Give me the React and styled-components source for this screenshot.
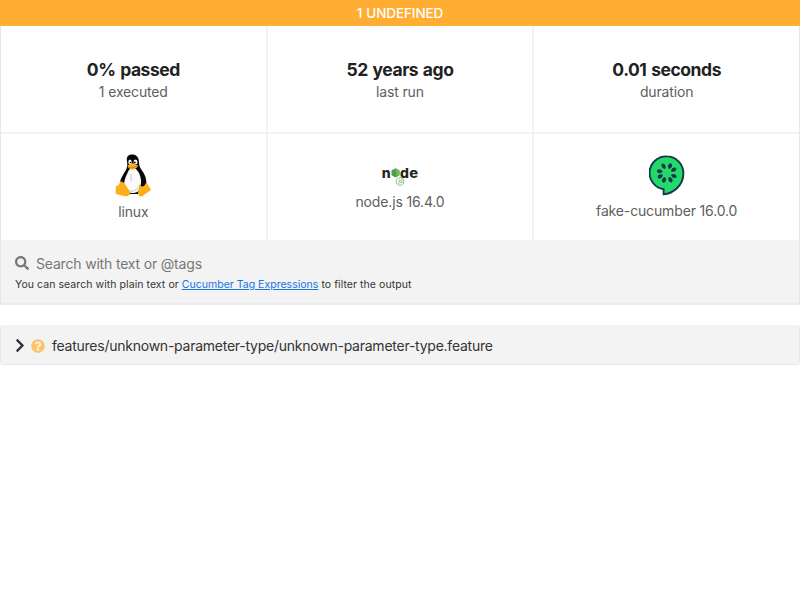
import React from "react";
import styled, { createGlobalStyle } from "styled-components";
import { FaSearch, FaQuestionCircle, FaChevronRight } from "react-icons/fa";

const GlobalStyle = createGlobalStyle`
  * { box-sizing: border-box; }
  body {
    margin: 0;
    background: #fff;
    font-family: Inter, "Liberation Sans", sans-serif;
    font-size: 14px;
    color: #333;
  }
`;

const Banner = styled.header`
  height: 26px;
  line-height: 26px;
  background: #ffad33;
  color: #fff;
  text-align: center;
  font-size: 13.5px;
  font-weight: 500;
  letter-spacing: -0.1px;
  word-spacing: 0.5px;
`;

const Summary = styled.dl`
  display: grid;
  grid-template-columns: repeat(3, 1fr);
  grid-template-rows: 106px 106px;
  gap: 2px;
  margin: 0;
  border: solid #e8e8e8;
  border-width: 0 1px;
  background: #f3f3f3;
`;

const Cell = styled.div`
  display: flex;
  flex-direction: column;
  align-items: center;
  padding-top: ${(p) => p.$top}px;
  background: #fff;
`;

const Value = styled.dt`
  height: 24px;
  line-height: 24px;
  font-size: 17.5px;
  font-weight: 700;
  letter-spacing: -0.45px;
  word-spacing: 1px;
  color: #222;
`;

const Label = styled.dd`
  margin: ${(p) => p.$gap ?? 0}px 0 0;
  line-height: 20px;
  letter-spacing: -0.15px;
  color: #5e5e5e;
`;

const SearchPanel = styled.section`
  height: 65px;
  padding: 14px 14px 0;
  border: solid #e8e8e8;
  border-width: 0 1px 2px;
  border-bottom-color: #ececec;
  background: #f3f3f3;
`;

const SearchField = styled.label`
  display: flex;
  align-items: center;
  gap: 7px;
  height: 20px;
  color: #777;

  svg { margin-top: -3px; }
`;

const SearchInput = styled.input`
  flex: 1;
  height: 20px;
  margin-top: -2px;
  padding: 0;
  border: 0;
  outline: 0;
  background: transparent;
  font: inherit;
  letter-spacing: -0.18px;

  &::placeholder { color: #777; opacity: 1; }
`;

const Hint = styled.p`
  margin: 3px 0 0;
  font-size: 10.5px;
  line-height: 15px;
  letter-spacing: 0.065px;
  white-space: nowrap;
  color: #333;

  a {
    color: #1872e8;
    letter-spacing: 0.02px;
    text-decoration: underline;
  }
`;

const Feature = styled.button`
  display: flex;
  align-items: center;
  width: 100%;
  height: 40px;
  margin-top: 20px;
  padding: 1px 14px 0;
  border: 1px solid #e8e8e8;
  border-top-color: #f3f3f3;
  border-radius: 3px;
  background: #f3f3f3;
  color: #333;
  font: inherit;
  line-height: 18px;
  letter-spacing: -0.245px;
`;

const Chevron = styled(FaChevronRight)`
  width: 10px;
  height: 15px;
  margin-right: 6px;
`;

const Status = styled(FaQuestionCircle)`
  margin-right: 7px;
  color: #ffc266;
`;

const Linux = () => (
  <svg width="36" height="43" viewBox="0 0 36 43">
    <path d="M12 7C11 2 14 .5 17.5.5S24 3 24 8c0 4 1 6 4 10 3 5 4 9 3 15l-6 7H11L5 31c0-6 2-8 4-12 2-3 4-5 3-12Z" fill="#080808" />
    <path d="M13 18c1-3 3-4 5-4 3 0 4 2 6 5 2 5 3 9 1 15-1 4-4 5-8 5-3 0-5-2-7-5-2-5 0-10 3-16Z" fill="#fafafa" />
    <ellipse cx="15" cy="8" rx="1.7" ry="2.5" fill="#fff" />
    <ellipse cx="20.5" cy="8" rx="2" ry="2.6" fill="#fff" />
    <circle cx="15.4" cy="8.5" r=".8" /><circle cx="19.8" cy="8.5" r=".9" />
    <path d="M12.5 11.5 17 9l6 2.5-1 2-4.5 2.5-4-2Z" fill="#f9b11c" />
    <path d="M13 13q4 2 9-1" fill="none" stroke="#a7660b" strokeWidth=".6" />
    <path d="M16 20v7m-5 8q6 5 12-1" fill="none" stroke="#b3b3b3" strokeWidth=".7" />
    <path d="M5 28c3-2 6 4 9 8 3 5-1 7-5 6L1 40c-1-2 0-4 0-8 2 0 3-1 4-4Z" fill="#fbb01b" />
    <path d="M24 30c1 3 5 4 7-1 2 0 2 3 4 5 3 2-2 4-6 7-3 3-6 1-6-2Z" fill="#fbb01b" />
  </svg>
);

const Word = styled.text`
  font-family: Inter, sans-serif;
  font-size: 13.5px;
  font-weight: 800;
  fill: #222722;
`;

const Node = () => (
  <svg width="36" height="23" viewBox="0 0 36 23">
    <Word x="-.3" y="14.7" textLength="8.9" lengthAdjust="spacingAndGlyphs">n</Word>
    <path d="m13.5 5.2 4 2.3v4.8l-4 2.3-4-2.3V7.5Z" fill="#4e9e43" />
    <path d="m13.5 5.2 4 2.3v4.8l-2.7 1.4Z" fill="#6fb95c" />
    <Word x="18.1" y="14.7" textLength="8.9" lengthAdjust="spacingAndGlyphs">d</Word>
    <Word x="27.3" y="14.7" textLength="8.9" lengthAdjust="spacingAndGlyphs">e</Word>
    <path d="m18 14.4 3.7 2v4.1L18 22.6l-3.7-2.1v-4.1Z" fill="#fff" stroke="#70b866" strokeWidth=".8" />
    <path d="M17.3 16.5v3.2q0 1-1 .6m4.2-3.2q-2.1-.8-2.2.4c0 .8 2.3.5 2.2 1.5q-.1 1.2-2.4.5" fill="none" stroke="#66ae5d" strokeWidth=".7" />
  </svg>
);

const SEEDS = [25, 65, 115, 155, 205, 245, 285, 335];

const Cucumber = () => (
  <svg width="36" height="41" viewBox="0 0 36 41">
    <path d="M17.8 1.4A16.5 16.5 0 0 0 14.6 34.2V39.3C24 38.5 34.3 31 34.4 18.3A16.6 16.8 0 0 0 17.8 1.4Z" fill="#23d96c" stroke="#173647" strokeWidth="1.9" />
    {SEEDS.map((angle) => (
      <path key={angle} transform={`rotate(${angle} 18 18)`} d="M18 13.6c-2.7-1.5-2.9-4.6-.7-6 2.9.3 3.3 4 .7 6Z" fill="#173647" />
    ))}
  </svg>
);

export default function App() {
  return (
    <>
      <GlobalStyle />
      <Banner>1 UNDEFINED</Banner>
      <Summary>
        <Cell $top={32}><Value>0% passed</Value><Label>1 executed</Label></Cell>
        <Cell $top={32}><Value>52 years ago</Value><Label>last run</Label></Cell>
        <Cell $top={32}><Value>0.01 seconds</Value><Label>duration</Label></Cell>
        <Cell $top={20}><Linux /><Label $gap={5}>linux</Label></Cell>
        <Cell $top={29}><Node /><Label $gap={6}>node.js 16.4.0</Label></Cell>
        <Cell $top={21}><Cucumber /><Label $gap={5}>fake-cucumber 16.0.0</Label></Cell>
      </Summary>
      <SearchPanel>
        <SearchField>
          <FaSearch />
          <SearchInput placeholder="Search with text or @tags" />
        </SearchField>
        <Hint>
          You can search with plain text or <a href="#tags">Cucumber Tag Expressions</a> to filter the output
        </Hint>
      </SearchPanel>
      <Feature>
        <Chevron />
        <Status />
        features/unknown-parameter-type/unknown-parameter-type.feature
      </Feature>
    </>
  );
}
